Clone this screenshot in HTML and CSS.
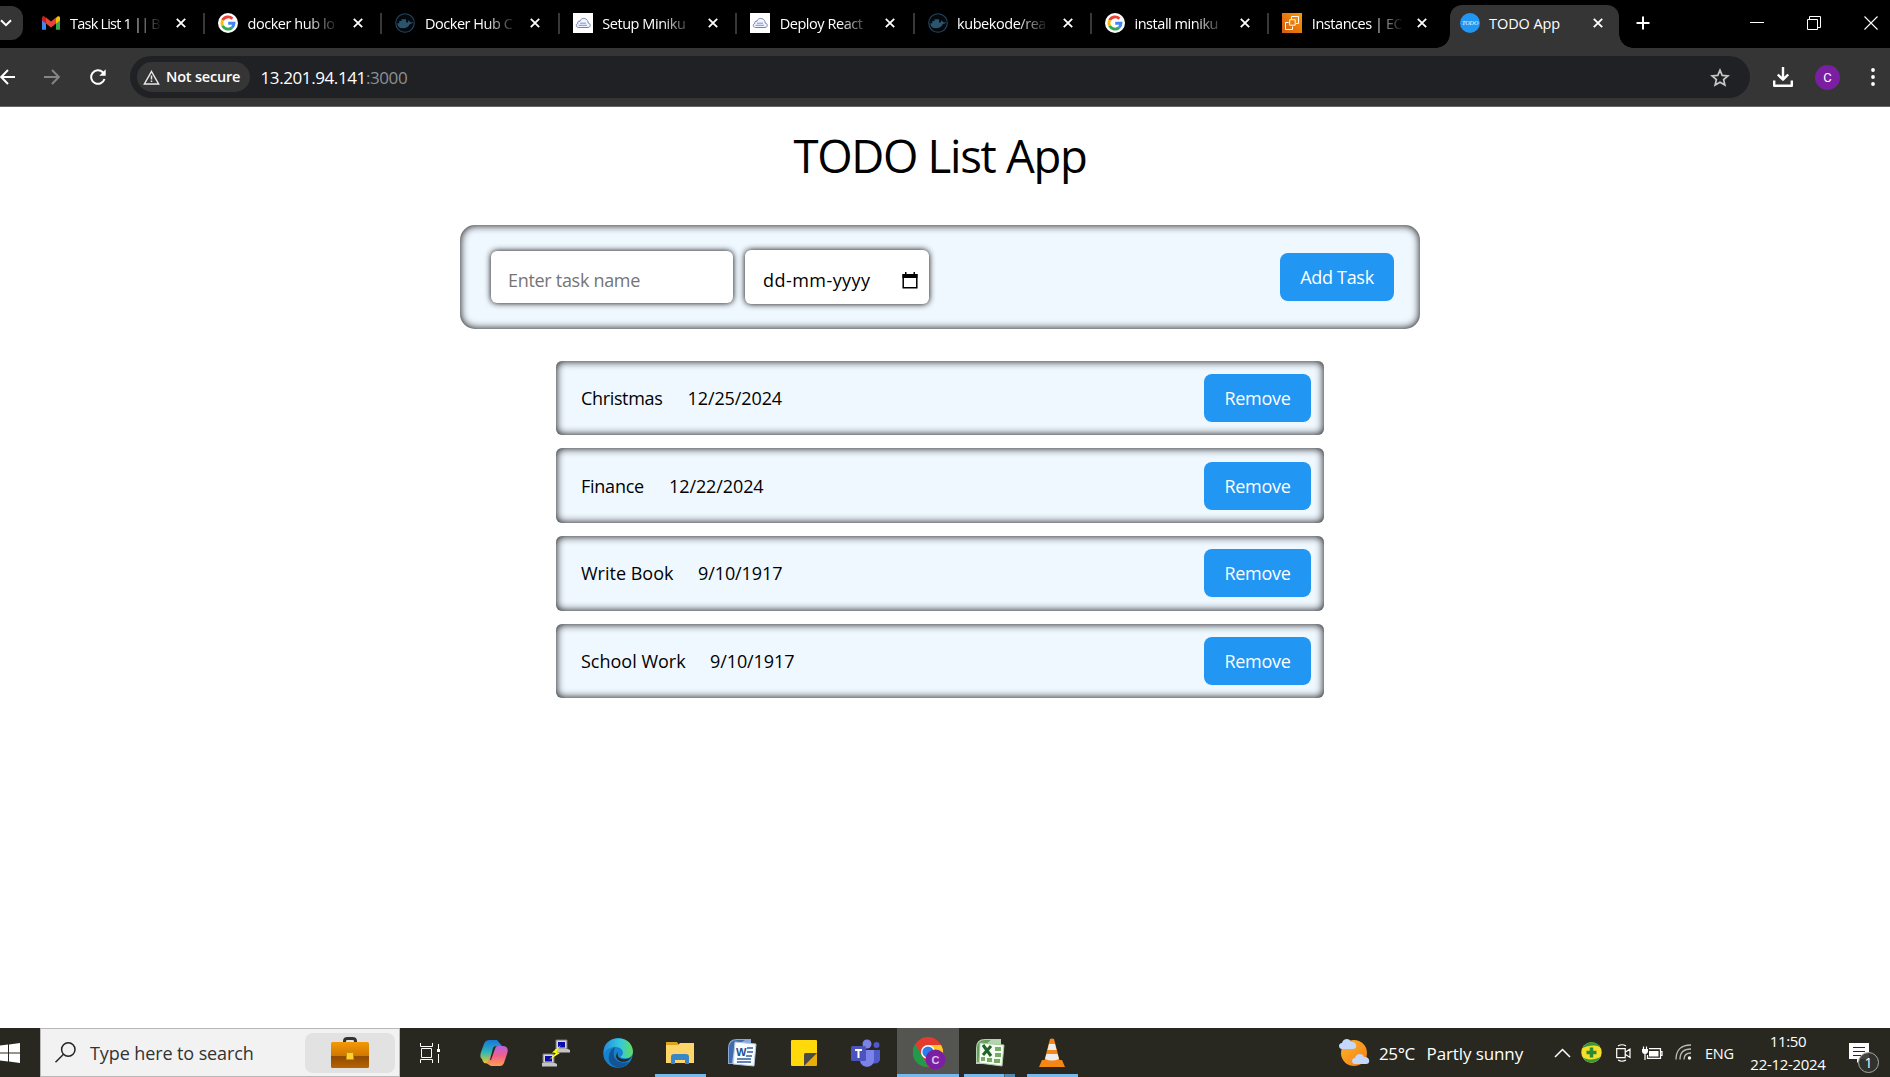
FILE: index.html
```html
<!DOCTYPE html>
<html lang="en">
<head>
<meta charset="utf-8">
<title>TODO App</title>
<link rel="stylesheet" href="styles.css">
</head>
<body>
<svg class="defs" width="0" height="0" aria-hidden="true">
  <defs>
    <symbol id="x" viewBox="0 0 10 10"><path d="M.8.8l8.4 8.4M9.2.8L.8 9.2" stroke="#fff" stroke-width="1.8" fill="none"/></symbol>
    <symbol id="google" viewBox="0 0 20 20">
      <circle cx="10" cy="10" r="10" fill="#fff"/>
      <g fill="none" stroke-width="2.9">
        <path d="M14.4 5.8A6.1 6.1 0 0 0 4.6 7.2" stroke="#ea4335"/>
        <path d="M4.6 7.2a6.1 6.1 0 0 0 0 5.6" stroke="#fbbc05"/>
        <path d="M4.6 12.8a6.1 6.1 0 0 0 9.4 1.8" stroke="#34a853"/>
        <path d="M14 14.6a6.1 6.1 0 0 0 2-4.3h-5.8" stroke="#4285f4"/>
      </g>
    </symbol>
    <symbol id="docker" viewBox="0 0 20 20">
      <circle cx="10" cy="10" r="9.3" fill="#03090e" stroke="#24465d" stroke-width="1.1"/>
      <path d="M2.3 10.2h2V8.1h2.2V6.2h4.6v3.2h1.6c.5-.4.4-1.6 1-2.2 1 .5 1.2 1.3 1.2 2 1 0 2-.2 3 .4-.6 1-1.7 1.3-3 1.3-1.4 3-3.700 4.300-7 4.300-3.700 0-5.400-1.700-5.600-5z" fill="#2b556f"/>
    </symbol>
    <symbol id="cloud" viewBox="0 0 20 20">
      <path d="M0 0h20v20H0z" fill="#fff"/>
      <path d="M5.500 14.500h9.500c3 0 2.800-4.300.3-4.300C15 4.500 8 4 7 8.200 4.500 7.600 4.600 10 4.900 10.400c-2.400.5-2 4.100.6 4.100z" fill="#f2f4fd" stroke="#7482a8" stroke-width="1"/>
      <path d="M7 10.200h6M5.500 12.300h8.500" stroke="#7d8fdf" stroke-width="1"/>
    </symbol>
  </defs>
</svg>

<header class="browser">
  <div class="tabstrip">
    <div class="tab-search"><svg width="12" height="8" viewBox="0 0 12 8"><path d="M1 1.200l5 5 5-5" stroke="#fff" stroke-width="2" fill="none"/></svg></div>
    <div class="tab">
      <svg class="favicon" viewBox="0 0 20 20"><path d="M1 4.500v12.200h4V9.500z" fill="#4285f4"/><path d="M19 4.500v12.200h-4V9.500z" fill="#34a853"/><path d="M15 5v5.500l4-3V5c0-2.500-2.500-2.500-4 0z" fill="#fbbc04"/><path d="M5 5v5.500l-4-3V5c0-2.500 2.500-2.500 4 0z" fill="#c5221f"/><path d="M5 4.500l5 4 5-4v6l-5 4-5-4z" fill="#ea4335"/></svg>
      <span class="tab-title mail-title">Task List 1 || B</span><svg class="tab-close"><use href="#x"/></svg>
    </div>
    <div class="tab"><svg class="favicon"><use href="#google"/></svg><span class="tab-title">docker hub lo</span><svg class="tab-close"><use href="#x"/></svg></div>
    <div class="tab"><svg class="favicon"><use href="#docker"/></svg><span class="tab-title">Docker Hub C</span><svg class="tab-close"><use href="#x"/></svg></div>
    <div class="tab"><svg class="favicon"><use href="#cloud"/></svg><span class="tab-title">Setup Miniku</span><svg class="tab-close"><use href="#x"/></svg></div>
    <div class="tab"><svg class="favicon"><use href="#cloud"/></svg><span class="tab-title">Deploy React</span><svg class="tab-close"><use href="#x"/></svg></div>
    <div class="tab"><svg class="favicon"><use href="#docker"/></svg><span class="tab-title">kubekode/rea</span><svg class="tab-close"><use href="#x"/></svg></div>
    <div class="tab"><svg class="favicon"><use href="#google"/></svg><span class="tab-title">install miniku</span><svg class="tab-close"><use href="#x"/></svg></div>
    <div class="tab tab-last">
      <svg class="favicon" viewBox="0 0 20 20"><defs><linearGradient id="ec" x1="0" y1="1" x2="1" y2="0"><stop offset="0" stop-color="#d05c17"/><stop offset="1" stop-color="#f90"/></linearGradient></defs><path d="M0 0h20v20H0z" fill="url(#ec)"/><g fill="none" stroke="#fff" stroke-width="1"><path d="M7.700 6.700h5.500v5.500H7.700z"/><path d="M9.500 6V3.500h7v7H14M6.600 9.500H3.500v7h7v-3"/></g></svg>
      <span class="tab-title">Instances | EC</span><svg class="tab-close"><use href="#x"/></svg>
    </div>
    <div class="tab tab-active"><span class="todo-icon"><span>TODO</span></span><span class="tab-title">TODO App</span><svg class="tab-close"><use href="#x"/></svg></div>
    <svg class="new-tab" viewBox="0 0 14 14"><path d="M7 .5v13M.5 7h13" stroke="#fff" stroke-width="2"/></svg>
    <div class="window-buttons">
      <svg width="14" height="14" viewBox="0 0 14 14"><path d="M0 6.500h14" stroke="#fff"/></svg>
      <svg width="14" height="14" viewBox="0 0 14 14"><path d="M.5 3.500h10v10H.5zM2.500 3V.5h11v11H11" stroke="#fff" fill="none"/></svg>
      <svg width="14" height="14" viewBox="0 0 14 14"><path d="M.5.5l13 13M13.500.5l-13 13" stroke="#fff" stroke-width="1.100"/></svg>
    </div>
  </div>
  <div class="toolbar">
    <svg class="nav-back" width="15" height="16" viewBox="0 0 15 16"><path d="M15 8H1.500M8 1L1.200 8 8 15" stroke="#fff" stroke-width="2" fill="none"/></svg>
    <svg class="nav-forward" width="16" height="16" viewBox="0 0 16 16"><path d="M0 8h14M8 1l6.800 7L8 15" stroke="#858585" stroke-width="2" fill="none"/></svg>
    <svg class="nav-reload" width="16" height="16" viewBox="0 0 16 16"><path d="M14.500 10A6.800 6.800 0 1 1 12.800 3.200L14 4.500" stroke="#fff" stroke-width="2" fill="none"/><path d="M15.700.3v6.400H9.300z" fill="#fff"/></svg>
    <div class="omnibox">
      <div class="chip"><svg width="17" height="15" viewBox="0 0 17 15"><path d="M8.500 1.500L15.600 13.900H1.400z" stroke="#e8e8e8" stroke-width="1.500" fill="none"/><path d="M8.500 5.500v4M8.500 10.500v1.600" stroke="#e8e8e8" stroke-width="1.500"/></svg><span>Not secure</span></div>
      <span class="url">13.201.94.141<span class="port">:3000</span></span>
      <svg class="star" width="20" height="19" viewBox="0 0 20 19"><path d="M10 2.200l2.200 5.200 5.700.5-4.300 3.700 1.300 5.500L10 14.200l-4.900 2.900 1.300-5.500L2.100 7.900l5.700-.5z" stroke="#c7c7c7" stroke-width="1.700" fill="none"/></svg>
    </div>
    <svg class="download" width="20" height="20" viewBox="0 0 20 20"><path d="M10 0v12M4.800 7.500L10 12.700l5.200-5.200M1.200 13.500v5.200h17.600v-5.200" stroke="#fff" stroke-width="2.400" fill="none" stroke-linejoin="round"/></svg>
    <span class="profile">C</span>
    <svg class="menu" width="4" height="18" viewBox="0 0 4 18"><g fill="#fff"><circle cx="2" cy="2" r="1.900"/><circle cx="2" cy="9" r="1.900"/><circle cx="2" cy="16" r="1.900"/></g></svg>
  </div>
</header>

<main class="page">
  <h1>TODO List App</h1>
  <section class="task-form">
    <div class="field name-field">Enter task name</div>
    <div class="field date-field"><span>dd-mm-yyyy</span><svg width="16" height="17" viewBox="0 0 16 17"><path d="M1.200 2.800h13.600v12.900H1.200z" fill="none" stroke="#000" stroke-width="1.500"/><path d="M.5 2h15v4H.5zM3 0h1.500v3H3zM11.500 0H13v3h-1.500z"/></svg></div>
    <button class="add">Add Task</button>
  </section>
  <ul class="tasks">
    <li><span class="n1">Christmas</span><time>12/25/2024</time><button>Remove</button></li>
    <li><span class="n2">Finance</span><time>12/22/2024</time><button>Remove</button></li>
    <li><span class="n3">Write Book</span><time>9/10/1917</time><button>Remove</button></li>
    <li><span class="n4">School Work</span><time>9/10/1917</time><button>Remove</button></li>
  </ul>
</main>

<footer class="taskbar">
  <div class="start"><svg width="20" height="20" viewBox="0 0 20 20"><path d="M-4 3L8 1.600V9.500H-4zM9 1.500L20 0v9.500H9zM-4 10.500H8v7.900L-4 17zM9 10.500h11V20L9 18.500z" fill="#fff"/></svg></div>
  <div class="search">
    <svg class="lens" width="21" height="21" viewBox="0 0 21 21"><circle cx="13.300" cy="7.500" r="6.700" fill="none" stroke="#222" stroke-width="1.500"/><path d="M8.500 12.300L.5 20.300" stroke="#222" stroke-width="1.500"/></svg>
    <span>Type here to search</span>
    <div class="highlight"><svg width="38" height="31" viewBox="0 0 38 31"><defs><linearGradient id="bag" x2="0" y2="1"><stop offset="0" stop-color="#f39a06"/><stop offset=".52" stop-color="#d27802"/><stop offset=".56" stop-color="#8f4b02"/><stop offset="1" stop-color="#b86403"/></linearGradient></defs><path d="M13.500 6V4q0-2.500 3-2.500h5q3 0 3 2.500v2" fill="none" stroke="#333" stroke-width="3"/><rect y="5" width="38" height="26" rx="1.500" fill="url(#bag)"/><path d="M15.500 15.500h7v7h-7z" fill="#ffd22b" stroke="#c98f07"/></svg></div>
  </div>
  <div class="taskview"><svg width="20" height="20" viewBox="0 0 20 20"><path d="M.5 0v3.500h12V0M.5 20v-3.500h12V20M1.500 5.500h10v9h-10zM18.500 1v5M18.500 11v9" fill="none" stroke="#fff"/><path d="M17 6h3v3h-3z" fill="#fff"/></svg></div>
  <div class="apps">
    <div class="app"><svg width="30" height="30" viewBox="0 0 30 30"><defs><linearGradient id="c1" x2="0" y2="1"><stop offset="0" stop-color="#1976d8"/><stop offset=".5" stop-color="#29b4bb"/><stop offset="1" stop-color="#e8cb22"/></linearGradient><linearGradient id="c2" x2="0" y2="1"><stop offset="0" stop-color="#b861df"/><stop offset=".5" stop-color="#f2608a"/><stop offset="1" stop-color="#ffa14e"/></linearGradient></defs><path d="M18 2l5 6h-5c-4 0-4 15-10 17-3 1-4-1-5-4-2-1-2-4-1-7L5 6c1-3 3-4 5-4z" fill="url(#c1)"/><path d="M12 28l-5-3c4 0 5-16 12-17h5c4 0 6 3 4 8l-3 9c-1 2-2 3-4 3z" fill="url(#c2)"/><path d="M17 8l-5 14h-1l3-12q1-2 3-2z" fill="#292921"/></svg></div>
    <div class="app"><svg width="30" height="30" viewBox="0 0 30 30"><g id="pc"><path d="M15 2h11v9H15z" fill="#d6d6d6" stroke="#777"/><path d="M17 4h7v5.500h-7z" fill="#0c0cae"/><path d="M14 11h13l2 1v3H14z" fill="#c4c4c4"/><path d="M14 14h15v1H14z" fill="#777"/></g><use href="#pc" x="-13" y="14"/><path d="M20 7l-9 7.500 4 .5L8 22l11-7-4-1z" fill="#ff0"/></svg></div>
    <div class="app"><svg width="30" height="30" viewBox="0 0 30 30"><defs><linearGradient id="e1"><stop offset="0" stop-color="#258ddc"/><stop offset=".55" stop-color="#33c9dd"/><stop offset="1" stop-color="#65dc5c"/></linearGradient></defs><circle cx="15" cy="15" r="14.800" fill="#1681cf"/><path d="M1 11C4-3 28-4 30 13c0 7-7 9-13 6 6-3 2-10-4-10C7 9 3 11 1 16z" fill="url(#e1)"/><path d="M12 9C8 20 14 27 26 24 22 30 14 31 9 27 3 22 6 12 12 9z" fill="#115595"/><path d="M15 14c-2 5 3 8 8 7q5-1 6-3c-2 5-9 8-14 4-3-3-2-6 0-8z" fill="#292921"/></svg></div>
    <div class="app running"><svg width="30" height="30" viewBox="0 0 30 30"><path d="M1 4h11l2 3H1z" fill="#dda51d"/><path d="M1 7h12l2-2h14v20H1z" fill="#ffd569"/><path d="M6 26v-7q0-3 3-3h12q3 0 3 3v7h-4v-4H10v4z" fill="#3987c8"/></svg></div>
    <div class="app"><svg width="30" height="30" viewBox="0 0 30 30"><path d="M1 26V10q0-9 9-9h14v25z" fill="#8ba8d6"/><path d="M2 9q1-7 8-7h8Q6 8 5 25H2z" fill="#406cad"/><path d="M8 4l21 2-2 22-21-2z" fill="#f8fbff" stroke="#b5c6df"/><path d="M20 10h6M20 14h6M19 18h6M10 21h14M10 24h14" stroke="#315f9d" stroke-width="1.700"/><text x="9" y="18" class="word-mark">W</text></svg></div>
    <div class="app"><svg width="26" height="26" viewBox="0 0 26 26"><path d="M1 0h24q1 0 1 1v12L13 26H1q-1 0-1-1V1q0-1 1-1z" fill="#ffd90a"/><path d="M13 13h13v12q0 1-1 1H13z" fill="#e9ac0b"/><path d="M13 26V15q0-2 2-2h11z" fill="#494946"/></svg></div>
    <div class="app"><svg width="30" height="30" viewBox="0 0 30 30"><circle cx="16" cy="6" r="4.500" fill="#7b83eb"/><circle cx="25.500" cy="7" r="3" fill="#5059c9"/><path d="M20 12h9v10q-2 5-8 3z" fill="#5059c9"/><path d="M9 12h14v10c0 9-14 9-14 0z" fill="#7b83eb"/><rect y="8" width="15" height="15" rx="1.500" fill="#4b53bc"/><path d="M4 12h7M7.500 12v8" stroke="#fff" stroke-width="2"/></svg></div>
    <div class="app running active"><svg width="34" height="34" viewBox="0 0 34 34"><circle cx="15" cy="15" r="15" fill="#e33b2e"/><path d="M2 7l9 15 4 8C2 30-4 17 2 7z" fill="#219a4b"/><path d="M15 8h13c6 10-1 22-13 22l7-13z" fill="#ffc928"/><circle cx="15" cy="15" r="7" fill="#fff"/><circle cx="15" cy="15" r="5.600" fill="#2b7de9"/><circle cx="22.500" cy="22.500" r="10" fill="#7b20a2"/><text x="22.500" y="26.500" text-anchor="middle" class="badge-letter">C</text></svg></div>
    <div class="app running grouped"><svg width="30" height="30" viewBox="0 0 30 30"><path d="M1 26V10q0-9 9-9h16v25z" fill="#b7d4b0"/><path d="M2 9q1-7 8-7h6Q6 8 5 24H2z" fill="#679d5c"/><path d="M5 5l24 2-2 21-23-3z" fill="#f5fbf2" stroke="#a7c79d"/><path d="M20 9h6v4h-6zM20 15h6v4h-6zM19 21h6v4h-6zM12 20h5v4h-5zM6 19h4v4H6z" fill="#75ad62"/><path d="M8 7l8 11M16 8L8 17" stroke="#21632b" stroke-width="3"/></svg></div>
    <div class="app running"><svg width="26" height="30" viewBox="0 0 26 30"><path d="M3 22h20l3 7H0z" fill="#f68713"/><path d="M11 1q2-1 4 0l6 23q-8 4-16 0z" fill="#f5871b"/><path d="M10 6h6l1.500 6h-9zM7.500 16h11l1.500 5q-7 3-14 0z" fill="#eee"/></svg></div>
  </div>
  <div class="tray">
    <svg class="weather" width="31" height="30" viewBox="0 0 31 30"><defs><linearGradient id="sun" x2="1" y2="1"><stop offset="0" stop-color="#ffb52d"/><stop offset="1" stop-color="#f17d12"/></linearGradient></defs><circle cx="15" cy="15" r="13" fill="url(#sun)"/><path id="cl" d="M3 11c-4 0-4-6 0-6 1-5 8-5 9-1 6-1 7 7 2 7z" fill="#c5d8fb"/><use href="#cl" x="13" y="15"/></svg>
    <span class="temp">25°C</span><span class="condition">Partly sunny</span>
    <svg class="caret" width="17" height="10" viewBox="0 0 17 10"><path d="M1 9l7.500-7.500L16 9" stroke="#fff" stroke-width="1.500" fill="none"/></svg>
    <svg class="shield" width="21" height="21" viewBox="0 0 21 21"><circle cx="10.500" cy="10.500" r="10.200" fill="#f8df27"/><path d="M1.500 6C5-1.500 16-1.500 19.500 5.500 15 2.500 8 3 1.500 6zM19.500 15c-3.500 7-14 7.500-17.500.500 6 3 11.500 2.500 17.500-.500z" fill="#319841"/><path d="M10.500 5.500v10M5.500 10.500h10" stroke="#268b35" stroke-width="3.500"/></svg>
    <svg class="meet" width="15" height="18" viewBox="0 0 15 18"><path d="M.7 4.700h8.500v9H.7zM9.500 8l4.500-3v8.500l-4.500-3M2 2q4-2.500 8 0M2 16q4 2.500 8 0" stroke="#fff" stroke-width="1.200" fill="none"/></svg>
    <svg class="battery" width="21" height="14" viewBox="0 0 21 14"><path d="M7 2.700h11.500v9.600H5.500V9M18.500 5.500h1.500v4h-1.500M3 6v8M1.500.5v3M4.500.5v3" stroke="#fff" stroke-width="1.200" fill="none"/><path d="M0 3h6v2q0 3-3 3T0 5zM7 5h9.500v5.500H7z" fill="#fff"/></svg>
    <svg class="wifi" width="17" height="17" viewBox="0 0 17 17"><path d="M1 15.500Q1 1 16 1M5 15.500Q5 5 16 5M9 15.500Q9 9 16 9" stroke="#bdbdb8" stroke-width="1.300" fill="none"/><circle cx="14.500" cy="14" r="1.700" fill="#fff"/></svg>
    <span class="lang">ENG</span>
    <div class="clock"><span class="time">11:50</span><span>22-12-2024</span></div>
    <div class="notifications"><svg width="20" height="20" viewBox="0 0 20 20"><path d="M0 0h20v16h-8l-4 4v-4H0z" fill="#fff"/><path d="M4 4.500h12M4 8.500h12M4 12.500h8" stroke="#272720" stroke-width="1.200"/></svg><span class="count">1</span></div>
  </div>
</footer>
</body>
</html>
```

FILE: styles.css
```css
* { box-sizing: border-box; }
body {
  margin: 0;
  width: 1890px;
  height: 1077px;
  overflow: hidden;
  display: flex;
  flex-direction: column;
  background: #fff;
  color: #000;
  font-family: "Open Sans", "Noto Sans", sans-serif;
  white-space: nowrap;
}
svg { display: block; flex: none; }
.defs { position: absolute; }

/* Browser window */
.browser { flex: none; height: 107px; border-bottom: 1px solid #666; background: #353535; color: #fff; }
.tabstrip { display: flex; height: 48px; background: #000; }
.tab-search { width: 23px; height: 34px; margin: 6px 3.6px 0 0; border-radius: 0 12px 12px 0; background: #353535; display: flex; align-items: center; }
.tab { position: relative; flex: none; display: flex; align-items: center; width: 177.4px; height: 46px; padding-left: 14px; }
.tab::after { content: ""; position: absolute; right: -1px; top: 13px; width: 2px; height: 21px; background: #383838; }
.tab-last::after { display: none; }
.favicon { width: 20px; height: 20px; margin-right: 9.5px; }
.tab-title { width: 92px; font-size: 14.5px; line-height: 24px; letter-spacing: -.45px; padding-top: 1px; -webkit-mask-image: linear-gradient(90deg, #000 65%, transparent 100%); mask-image: linear-gradient(90deg, #000 65%, transparent 100%); }
.mail-title { letter-spacing: -.8px; }
.tab-close { width: 10px; height: 10px; margin-left: 13.5px; }
.tab-active { width: 168.5px; height: 43px; margin: 5px 0 0 4.4px; padding: 0 0 7px 10px; border-radius: 12px 12px 0 0; background: #353535; }
.tab-active::before, .tab-active::after { content: ""; position: absolute; left: -14px; top: auto; bottom: 0; width: 14px; height: 14px; background: radial-gradient(circle at 0 0, transparent 13.5px, #353535 14px); }
.tab-active::after { left: auto; right: -14px; background: radial-gradient(circle at 100% 0, transparent 13.5px, #353535 14px); }
.tab-active .tab-title { width: 104px; letter-spacing: -.1px; -webkit-mask-image: none; mask-image: none; }
.tab-active .tab-close { margin-left: 0; }
.todo-icon { display: flex; flex: none; align-items: center; justify-content: center; width: 20px; height: 20px; margin-right: 9px; border-radius: 50%; background: #2196f3; font: italic 6px "Liberation Serif", serif; }
.new-tab { width: 14px; height: 14px; margin: 16px 0 0 17.5px; }
.window-buttons { display: flex; gap: 43px; margin: 16px 12px 0 auto; }
.toolbar { display: flex; align-items: center; height: 58px; }
.nav-forward { margin-left: 29px; }
.nav-reload { margin-left: 30px; }
.omnibox { display: flex; align-items: center; width: 1620px; height: 42px; margin-left: 24px; padding: 0 20px 0 7px; border-radius: 21px; background: #202124; }
.chip { display: flex; align-items: center; gap: 6px; width: 113px; height: 30px; padding-left: 6px; border-radius: 15px; background: #353535; font-size: 14.500px; font-weight: 600; letter-spacing: -.2px; }
.chip span { margin-top: -1px; }
.url { margin-left: 10.5px; font-size: 17px; letter-spacing: -.4px; }
.port { color: #8e9094; }
.star { margin-left: auto; }
.download { margin-left: 22.5px; }
.profile { display: flex; align-items: center; justify-content: center; width: 25px; height: 25px; margin-left: 22.5px; border-radius: 50%; background: #7b1fa2; font: 13px Roboto, sans-serif; }
.menu { margin-left: 30.5px; }

/* Task application */
.page { flex: 1; display: flex; flex-direction: column; align-items: center; width: 1880px; }
h1 { margin: 16px 0 38px; font-size: 45.5px; line-height: 64px; font-weight: 400; letter-spacing: -1.3px; }
.task-form { display: flex; align-items: center; width: 960px; height: 104px; padding: 0 26px 0 31px; border-radius: 15px; background: #f0f8ff; box-shadow: inset 0 0 8px #000; }
.field { display: flex; align-items: center; height: 52px; border-radius: 6px; background: #fff; box-shadow: 0 0 6px #000; font-size: 18px; }
.name-field { width: 242px; padding: 6px 0 0 17px; color: #757575; letter-spacing: -.3px; }
.date-field { width: 184px; height: 54px; margin-left: 12px; padding: 6px 11px 0 18px; justify-content: space-between; letter-spacing: .45px; }
.date-field svg { margin-top: 0; }
button { width: 107px; height: 48px; padding: 0; margin-left: auto; border: 0; border-radius: 8px; background: #2196f3; color: #fff; font: 18px "Open Sans", sans-serif; letter-spacing: -.3px; }
.add { width: 114px; }
.tasks { display: flex; flex-direction: column; gap: 13px; width: 768px; margin: 31.700px 0 0; padding: 0; list-style: none; }
.tasks li { display: flex; align-items: center; height: 74.700px; padding: 0 13px 0 25px; border-radius: 6px; background: #f0f8ff; box-shadow: inset 0 0 8px #000; font-size: 18px; letter-spacing: -.35px; }
.tasks time { letter-spacing: -.1px; }
.tasks .n1 { width: 106.500px; }
.tasks .n2 { width: 88px; letter-spacing: -.25px; }
.tasks .n3 { width: 117px; letter-spacing: 0; }
.tasks .n4 { width: 129px; letter-spacing: 0; }

/* Desktop taskbar */
.taskbar { flex: none; display: flex; height: 49px; background: #282820; color: #fff; }
.start { display: flex; align-items: center; width: 40px; }
.search { position: relative; display: flex; align-items: center; width: 360px; padding: 0 4px 0 14px; border: 1px solid #b8b8b8; background: #f2f2f2; color: #333; font-size: 18px; letter-spacing: -.1px; }
.search span { margin: 1px 0 0 14px; }
.highlight { display: flex; align-items: center; justify-content: center; width: 90px; height: 40px; margin-left: auto; border-radius: 8px; background: #e2e2e2; }
.taskview { display: flex; align-items: center; width: 63px; padding-left: 20px; }
.apps { display: flex; }
.app { position: relative; display: flex; align-items: center; justify-content: center; width: 62px; }
.running::after { content: ""; position: absolute; bottom: 0; left: 6px; width: 51px; height: 3px; background: #76b9ed; }
.active { background: #545450; }
.active::after { left: 0; width: 62px; }
.active svg { margin: 3px 0 0 3px; }
.grouped::after { left: 5px; background: linear-gradient(90deg, #76b9ed 40px, #42657d 40px, #42657d 41px, #5289b1 41px); }
.word-mark { font: bold 11px "Liberation Sans", sans-serif; fill: #244f91; }
.badge-letter { font: bold 11px "Liberation Sans", sans-serif; fill: #dec4eb; }
.tray { display: flex; align-items: center; margin-left: auto; width: 551px; }
.temp { width: 38px; margin-left: 9px; font-size: 17px; letter-spacing: -.4px; padding-top: 1px; }
.condition { width: 115px; margin-left: 9.500px; font-size: 17px; letter-spacing: -.1px; padding-top: 1px; }
.caret { margin-left: 12.500px; }
.shield { margin-left: 10px; }
.meet { margin-left: 14px; }
.battery { margin-left: 11px; }
.wifi { margin-left: 12px; }
.lang { width: 30px; margin-left: 13px; font-size: 14.500px; letter-spacing: -.2px; padding-top: 1px; }
.clock { display: flex; flex-direction: column; align-items: center; width: 80px; margin-left: 13px; font-size: 15px; line-height: 23px; letter-spacing: -.3px; }
.notifications { position: relative; margin-left: 21px; }
.count { position: absolute; left: 9px; top: 9px; width: 21px; height: 21px; border: 1px solid #aaa; border-radius: 50%; background: #33332ee8; font-size: 14px; line-height: 19px; text-align: center; }
```
